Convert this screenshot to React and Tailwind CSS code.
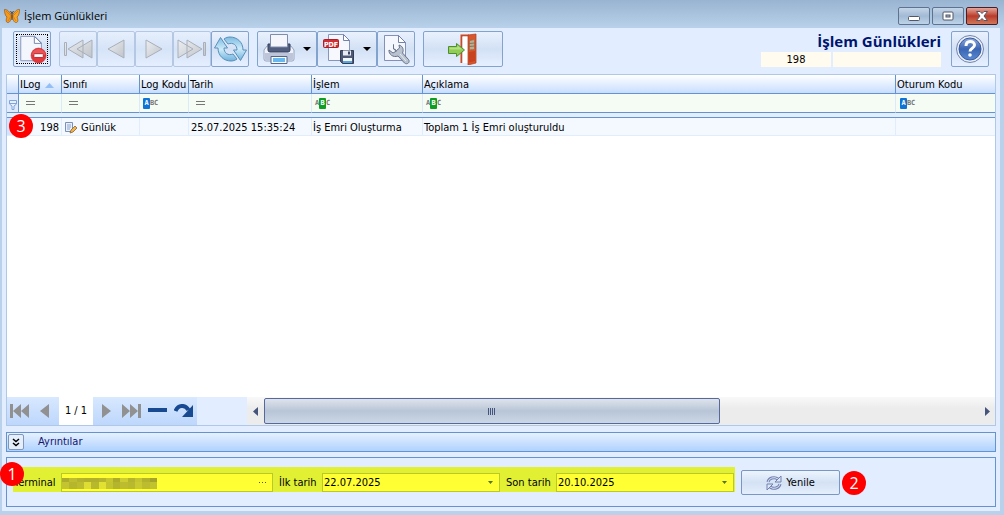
import React from 'react';

const toolButton =
  'flex h-9 shrink-0 items-center justify-center rounded-[2px] border bg-linear-to-b';
const normal = 'border-[#83a3cf] from-[#e9f1fd] via-[#d3e1f5] to-[#e6f0ff]';
const faded = 'border-[#b4c7e3] from-[#e6effc] via-[#d6e4f8] to-[#e4eefe]';

function ToolButton({ label, className, disabled, children }) {
  return (
    <button type="button" aria-label={label} disabled={disabled} className={`${toolButton} ${disabled ? faded : normal} ${className}`}>
      {children}
    </button>
  );
}

function Butterfly() {
  return (
    <svg width="16" height="16" viewBox="0 0 16 16">
      <path d="M.5 1.500C3 1 6 4 7.500 7.500 7.500 11 6 15 3.500 14.500 1.500 14 2 11 3 9 1 8 .5 4 .5 1.500Z" fill="#f39a1c" stroke="#8a4a10" strokeWidth=".6" />
      <path d="M15.500 1.500C13 1 10 4 8.500 7.500 8.500 11 10 15 12.500 14.500 14.500 14 14 11 13 9 15 8 15.500 4 15.500 1.500Z" fill="#f7a626" stroke="#8a4a10" strokeWidth=".6" />
      <path d="M2 3l5 5-3 5M14 3L9 8l3 5" fill="none" stroke="#d97c0c" strokeWidth=".8" />
      <path d="M8 5v7M8 5.500L6.500 3M8 5.500L9.500 3" stroke="#4f3420" strokeWidth=".9" />
    </svg>
  );
}

function GrayDefs() {
  return (
    <defs>
      <linearGradient id="gray" x1="0" y1="0" x2="1" y2="1">
        <stop offset="0" stopColor="#eceef1" />
        <stop offset="1" stopColor="#bfc4ca" />
      </linearGradient>
    </defs>
  );
}

function FirstIcon() {
  return (
    <svg width="30" height="20" viewBox="0 0 30 20" fill="url(#gray)" stroke="#a9afb8" strokeLinejoin="round">
      <GrayDefs />
      <path d="M1.500 3.500h2v13h-2zM20 1v18L5 10zM29 1v18L14 10z" />
    </svg>
  );
}

function PrevIcon() {
  return (
    <svg width="18" height="20" viewBox="0 0 18 20" fill="url(#gray)" stroke="#a9afb8" strokeLinejoin="round">
      <path d="M17 1v18L1 10z" />
    </svg>
  );
}

function NextIcon() {
  return (
    <svg width="18" height="20" viewBox="0 0 18 20" fill="url(#gray)" stroke="#a9afb8" strokeLinejoin="round">
      <path d="M1 1v18l16-9z" />
    </svg>
  );
}

function LastIcon() {
  return (
    <svg width="30" height="20" viewBox="0 0 30 20" fill="url(#gray)" stroke="#a9afb8" strokeLinejoin="round">
      <path d="M26.500 3.500h2v13h-2zM10 1v18l15-9zM1 1v18l15-9z" />
    </svg>
  );
}

function DeletePageIcon() {
  return (
    <svg width="32" height="32" viewBox="0 0 32 32">
      <path d="M4 2.500h15l7 7v19H4z" fill="#f4f6fd" stroke="#8391b8" />
      <path d="M18.500 2.500v7.500H26z" fill="#fff" stroke="#7482ab" />
      <circle cx="23" cy="23" r="8" fill="#e2383c" stroke="#c5292e" strokeWidth=".6" />
      <path d="M15.800 22a7.300 7.300 0 0 1 14.400 0z" fill="#f2686a" opacity=".6" />
      <rect x="18" y="21" width="10" height="4" rx=".5" fill="#fff" stroke="#b2252b" />
    </svg>
  );
}

function RefreshIcon() {
  return (
    <svg width="33" height="26" viewBox="0 0 33 26" strokeLinejoin="round">
      <defs>
        <linearGradient id="cyan" x1="0" y1="0" x2="0" y2="1">
          <stop offset="0" stopColor="#7dbce2" />
          <stop offset=".5" stopColor="#cdebf9" />
          <stop offset="1" stopColor="#6fb2dc" />
        </linearGradient>
      </defs>
      <path d="M6.500 1.500L.5 12H4c0 8 6 13 13 13 2 0 4-.5 6-2l-4-5c-5 2-9-1-9-6h3.500z" fill="url(#cyan)" stroke="#5a8fba" />
      <path d="M26.500 24.500L32.500 14H29C29 6 23 1 16 1c-2 0-4 .5-6 2l4 5c5-2 9 1 9 6h-3.500z" fill="url(#cyan)" stroke="#5a8fba" />
    </svg>
  );
}

function PrinterIcon() {
  return (
    <svg width="32" height="32" viewBox="0 0 32 32">
      <path d="M4 13h24l3 4v9q0 2-2 2H3q-2 0-2-2v-9z" fill="#eef1f8" stroke="#98a4bf" />
      <path d="M2 20h28v6q0 1.500-2 1.500H4Q2 27.500 2 26z" fill="#bcc5d9" />
      <path d="M5 11h22v6q0 2-2 2H7q-2 0-2-2z" fill="#515e7d" stroke="#35415f" />
      <path d="M7.500 1.500h17V14h-17z" fill="#f4f6fc" stroke="#7e8cae" />
      <path d="M8 23.500h16v7H8z" fill="#f6fbff" stroke="#566686" />
      <path d="M10 25h12v4H10z" fill="#66b8ee" />
    </svg>
  );
}

function PdfIcon() {
  return (
    <svg width="32" height="32" viewBox="0 0 32 32">
      <path d="M5.500 1.500h15l6 6v20h-21z" fill="#f7f8fe" stroke="#8795bd" />
      <path d="M20.500 1.500v6h6z" fill="#fff" stroke="#7482ab" />
      <rect x=".5" y="6.500" width="15" height="8" rx="1" fill="#cf2f35" stroke="#a91f25" />
      <text x="8" y="13.500" textAnchor="middle" fill="#fff" fontFamily="DejaVu Sans Condensed" fontWeight="700" fontSize="7">PDF</text>
      <path d="M17.500 17.500h13v13h-11l-2-2z" fill="#4e5976" stroke="#343e59" />
      <path d="M20 17.500h8v5h-8z" fill="#e8edf5" />
      <path d="M25 18.500h2v3h-2z" fill="#3c4663" />
      <path d="M20 25h9v5h-9z" fill="#f3f8fc" />
      <path d="M20 28h9v2h-9z" fill="#58a8dc" />
    </svg>
  );
}

function WrenchPageIcon() {
  return (
    <svg width="28" height="32" viewBox="0 0 28 32">
      <path d="M2.500 2.500h14l7 7v18h-21z" fill="#f5f7fe" stroke="#8391b8" />
      <path d="M16.500 2.500v7h7z" fill="#fff" stroke="#7482ab" />
      <path d="M11.500 11.500v4l3 2 3-2.500-.5-3c4 1 5 5 3.500 8l6 6.500c2 3-1.500 5.500-4 3.500L16 23c-5 2-9.500-2-9-6l4 3 3.500-2-3-2z" fill="#b9c2cf" stroke="#67738a" strokeLinejoin="round" />
      <path d="M18 21l6 7" stroke="#e9edf2" />
    </svg>
  );
}

function ExitIcon() {
  return (
    <svg width="30" height="32" viewBox="0 0 30 32">
      <path d="M13.500 30V2.500H21" fill="none" stroke="#cb4a25" strokeWidth="2" />
      <path d="M14.500 3.500H20V30h-5.500z" fill="#fff" />
      <path d="M20 2l8-1v29l-8 2z" fill="#d9552c" stroke="#b03b1b" strokeWidth=".7" />
      <path d="M21.500 7.500l5-1v10l-5 .5z" fill="#e9dfc0" stroke="#9b5b37" strokeWidth=".7" />
      <path d="M23 7v10M25 7v9.500M21.500 10.500l5-.5M21.500 13.500l5-.5" stroke="#78624a" strokeWidth=".8" />
      <path d="M21 19l6-1v10l-6 1.500z" fill="#c7431f" />
      <path d="M.5 13.500h8v-3l8 6.500-8 6.500v-3h-8z" fill="#8fcd55" stroke="#508d31" strokeLinejoin="round" />
      <path d="M1.500 14.500h8v-2l4.500 4H1.500z" fill="#c4e996" opacity=".7" />
    </svg>
  );
}

function HelpIcon() {
  return (
    <svg width="30" height="30" viewBox="0 0 30 30">
      <defs>
        <linearGradient id="help" x1="0" y1="0" x2="0" y2="1">
          <stop offset="0" stopColor="#8fabdc" />
          <stop offset=".5" stopColor="#3a65b3" />
          <stop offset="1" stopColor="#5c8bd2" />
        </linearGradient>
      </defs>
      <circle cx="15" cy="15" r="13.500" fill="#e8eefa" stroke="#7384ad" />
      <circle cx="15" cy="15" r="11" fill="url(#help)" stroke="#385b9d" />
      <path d="M11 12c0-6 8.500-5.500 8.500-1 0 3.500-4.500 3-4.500 6.500" fill="none" stroke="#fff" strokeWidth="3" />
      <circle cx="15" cy="21" r="1.800" fill="#fff" />
    </svg>
  );
}

function Caret() {
  return (
    <svg width="8" height="4" viewBox="0 0 8 4">
      <path d="M0 0h8L4 4z" fill="#000" />
    </svg>
  );
}

function Badge({ n, className }) {
  return (
    <span className={`flex size-6 items-center justify-center rounded-full bg-[#fe0000] font-['Open_Sans',sans-serif] text-base leading-6 text-white ${className}`}>
      {n}
    </span>
  );
}

function EqualsIcon() {
  return (
    <svg width="9" height="4" viewBox="0 0 9 4" className="ml-[7px]" shapeRendering="crispEdges">
      <path d="M0 0h9v1H0zM0 3h9v1H0z" fill="#777" />
    </svg>
  );
}

function AbcFilter({ active }) {
  const color = active === 'A' ? 'bg-[#0f74d8]' : 'bg-[#0d9e22]';
  return (
    <span className="flex h-[11px] font-['DejaVu_Sans_Mono',monospace] text-[7px] leading-[11px] font-bold text-[#777]">
      {['A', 'B', 'C'].map((c) => (
        <span key={c} className={c === active ? `w-[7px] rounded-[1px] text-center text-white ${color}` : 'w-1 text-center'}>
          {c}
        </span>
      ))}
    </span>
  );
}

const columns = ['ILog', 'Sınıfı', 'Log Kodu', 'Tarih', 'İşlem', 'Açıklama', 'Oturum Kodu'];

function LogTable() {
  return (
    <table className="w-full table-fixed border-separate border-spacing-0">
      <colgroup>
        <col className="w-3" />
        <col className="w-[43px]" />
        <col className="w-[78px]" />
        <col className="w-[49px]" />
        <col className="w-[123px]" />
        <col className="w-[111px]" />
        <col />
        <col className="w-[99px]" />
      </colgroup>
      <thead>
        <tr className="h-[19px] bg-linear-to-b from-white to-[#c5dcff] text-left">
          <th className="border-r border-b border-[#6593cf] p-0" />
          {columns.map((c, i) => (
            <th key={c} className="border-b border-[#6593cf] p-0 font-normal not-last:border-r">
              <span className="flex items-center pt-0.5 pl-px leading-4 whitespace-nowrap">
                {c}
                {i === 0 && (
                  <svg width="9" height="5" viewBox="0 0 9 5" className="ml-1">
                    <path d="M4.500 0L9 5H0z" fill="#94bff5" />
                  </svg>
                )}
              </span>
            </th>
          ))}
        </tr>
        <tr className="h-[19px] bg-[#f4fcf3] [&>td]:border-b [&>td]:border-b-[#6593cf] [&>td]:p-0">
          <td className="border-r border-[#6593cf] bg-[#dfebfc]">
            <svg width="8" height="10" viewBox="0 0 8 10" className="mt-1 ml-0.5" fill="#e6f0ff" stroke="#7fa5dc">
              <path d="M.5.500h7V4L5 6v3.500H3V6L.5 4zM.5 3.500h7" />
            </svg>
          </td>
          <td className="border-r border-r-[#dce9fa]"><EqualsIcon /></td>
          <td className="border-r border-r-[#dce9fa]"><EqualsIcon /></td>
          <td className="border-r border-r-[#dce9fa] pl-[3px]!"><AbcFilter active="A" /></td>
          <td className="border-r border-r-[#dce9fa]"><EqualsIcon /></td>
          <td className="border-r border-r-[#dce9fa] pl-[3px]!"><AbcFilter active="B" /></td>
          <td className="border-r border-r-[#dce9fa] pl-[3px]!"><AbcFilter active="B" /></td>
          <td className="pl-1!"><AbcFilter active="A" /></td>
        </tr>
        <tr className="h-[5px]">
          <td colSpan={8} className="border-b border-[#6593cf] bg-[#e3eefd] p-0" />
        </tr>
      </thead>
      <tbody>
        <tr className="h-[18px] bg-[#f4f9ff] leading-[15px] [&>td]:border-b [&>td]:border-[#e1edfc] [&>td]:px-0 [&>td]:pt-0.5 [&>td]:pb-0 [&>td]:whitespace-nowrap [&>td:not(:last-child)]:border-r">
          <td className="relative bg-[#d4e4fa]">
            <Badge n={3} className="absolute -top-1 left-0.5" />
          </td>
          <td className="pr-0.5! text-right">198</td>
          <td>
            <span className="flex items-center gap-1 pl-[3px]">
              <svg width="12" height="12" viewBox="0 0 12 12">
                <path d="M.5.500h7v9h-7z" fill="#eaf0fb" stroke="#7b90b8" />
                <path d="M2 3h4M2 5h4M2 7h3" stroke="#8ba4cd" />
                <path d="M5 11l1-3 4-4 2 2-4 4z" fill="#f0b64b" stroke="#8d6235" strokeWidth=".8" />
              </svg>
              Günlük
            </span>
          </td>
          <td />
          <td className="pl-0.5!">25.07.2025 15:35:24</td>
          <td className="pl-px!">İş Emri Oluşturma</td>
          <td className="pl-px!">Toplam 1 İş Emri oluşturuldu</td>
          <td />
        </tr>
      </tbody>
    </table>
  );
}

function RecordBar() {
  return (
    <div className="flex h-7 bg-[#e2eeff]">
      <div className="flex w-[190px] shrink-0 items-center bg-linear-to-b from-[#d8e8ff] to-[#bdd7fc] text-[#919191]">
        <button type="button" aria-label="İlk" className="ml-[3px]">
          <svg width="19" height="14" viewBox="0 0 19 14" fill="currentColor"><path d="M0 0h3v14H0zM11 0v14L3 7zM19 0v14l-8-7z" /></svg>
        </button>
        <button type="button" aria-label="Önceki" className="ml-[11px]">
          <svg width="9" height="14" viewBox="0 0 9 14" fill="currentColor"><path d="M9 0v14L0 7z" /></svg>
        </button>
        <span className="ml-2.5 flex h-full w-[34px] items-center justify-center bg-white text-black">1 / 1</span>
        <button type="button" aria-label="Sonraki" className="ml-[9px]">
          <svg width="9" height="14" viewBox="0 0 9 14" fill="currentColor"><path d="M0 0v14l9-7z" /></svg>
        </button>
        <button type="button" aria-label="Son" className="ml-[11px]">
          <svg width="19" height="14" viewBox="0 0 19 14" fill="currentColor"><path d="M16 0h3v14h-3zM8 0v14l8-7zM0 0v14l8-7z" /></svg>
        </button>
        <button type="button" aria-label="Sil" className="ml-[7px]">
          <svg width="19" height="14" viewBox="0 0 19 14"><path d="M0 4h19v4H0z" fill="#174a91" /></svg>
        </button>
        <button type="button" aria-label="Tazele" className="ml-[7px]">
          <svg width="19" height="14" viewBox="0 0 19 14">
            <path d="M1.500 7C4 1 11 0 14.500 6" fill="none" stroke="#174a91" strokeWidth="4" />
            <path d="M19 1v12H8z" fill="#174a91" />
          </svg>
        </button>
      </div>
      <div className="w-[50px] shrink-0" />
      <div className="flex flex-1 items-center bg-linear-to-b from-[#f9f9f9] to-[#ececec] to-40%">
        <button type="button" aria-label="Sola kaydır" className="flex w-[17px] shrink-0 justify-center">
          <svg width="5" height="9" viewBox="0 0 5 9"><path d="M5 0v9L0 4.500z" fill="#46547b" /></svg>
        </button>
        <div className="flex h-full flex-1 items-center pr-1">
          <div className="flex h-[26px] w-[64%] items-center justify-center gap-px rounded-[2px] border border-[#58689a] bg-linear-to-b from-[#dfe4eb] via-[#b8c5d7] to-[#ccd7e6]">
            <span className="h-[7px] w-px bg-[#46547b]" />
            <span className="h-[7px] w-px bg-[#46547b]" />
            <span className="h-[7px] w-px bg-[#46547b]" />
            <span className="h-[7px] w-px bg-[#46547b]" />
          </div>
        </div>
        <button type="button" aria-label="Sağa kaydır" className="flex w-[15px] shrink-0 justify-center">
          <svg width="5" height="9" viewBox="0 0 5 9"><path d="M0 0v9l5-4.500z" fill="#46547b" /></svg>
        </button>
      </div>
    </div>
  );
}

const mosaic = [
  ['#adad2b', '#bdbd2f', '#b3b32d', '#b0b02c', '#b0b02c', '#b6b62d', '#c6c62e', '#acac2a', '#cdcd31', '#b5b52d', '#c5c530', '#b2b22d', '#a4a42a'],
  ['#c4c430', '#b6b62d', '#bcbc2e', '#dddd33', '#b8b82d', '#e1e133', '#c4c42f', '#b4b42d', '#bcbc2e', '#b9b92e', '#c9c931', '#bcbc2e', '#c2c22f'],
];

const field = 'flex h-[19px] items-center border border-[#b9c929] bg-[#ffff33]';

function DateField({ id, label, value, className }) {
  return (
    <>
      <label htmlFor={id} className={`shrink-0 pl-1.5 leading-[19px] ${className}`}>{label}</label>
      <div className={`${field} w-[178px]`}>
        <input id={id} type="text" defaultValue={value} className="min-w-0 flex-1 bg-transparent pl-px text-[11px] outline-none" />
        <button type="button" aria-label={`${label} seç`} className="flex w-[18px] justify-center text-[#55752d]">
          <svg width="5" height="3" viewBox="0 0 5 3"><path d="M0 0h5L2.500 3z" fill="currentColor" /></svg>
        </button>
      </div>
    </>
  );
}

function FilterPanel() {
  return (
    <div className="mt-[5px] mb-1 flex h-[50px] items-start border border-[#6593cf] pt-[9px] pl-1.5">
      <div className="relative flex h-[25px] items-end bg-[#e2f033] pr-px">
        <Badge n={1} className="absolute -top-[5px] -left-[13px]" />
        <label htmlFor="terminal" className="w-12 shrink-0 pl-px leading-[19px]">Terminal</label>
        <div className={`${field} w-[212px]`}>
          <div className="relative flex-1">
            <input id="terminal" type="text" className="block w-full bg-transparent outline-none" />
            <svg width="95" height="11" viewBox="0 0 95 11" className="absolute top-[3px] left-0" shapeRendering="crispEdges">
              {mosaic.map((row, y) =>
                row.map((fill, x) => (
                  <rect key={`${x}-${y}`} x={x * 7.300} y={y * 4} width="7.400" height={y ? 7 : 4} fill={fill} />
                ))
              )}
            </svg>
          </div>
          <button type="button" aria-label="Terminal seç" className="flex w-[18px] justify-center">
            <svg width="8" height="1" viewBox="0 0 8 1"><path d="M0 0h1v1H0zM3 0h1v1H3zM6 0h1v1H6z" fill="#555b20" /></svg>
          </button>
        </div>
        <DateField id="start" label="İlk tarih" value="22.07.2025" className="w-[49px]" />
        <DateField id="end" label="Son tarih" value="20.10.2025" className="w-14" />
      </div>
      <button type="button" className="mt-[3px] ml-1.5 flex h-[25px] w-[99px] items-center justify-center gap-1 rounded-[2px] border border-[#7897c4] bg-linear-to-b from-[#edf4fe] via-[#d4e2f4] to-[#e4eefc]">
        <svg width="16" height="16" viewBox="0 0 16 16" fill="none">
          <path d="M2 7a6 5 0 0 1 10-3M14 9a6 5 0 0 1-10 3" stroke="#7281b0" strokeWidth="3" />
          <path d="M2 7a6 5 0 0 1 10-3M14 9a6 5 0 0 1-10 3" stroke="#dce6f6" />
          <path d="M15 1v6H9zM1 15V9h6z" fill="#dce6f6" stroke="#7281b0" strokeLinejoin="round" />
        </svg>
        Yenile
      </button>
      <Badge n={2} className="mt-1 ml-0.5" />
    </div>
  );
}

const windowButton = 'flex h-[18px] w-8 items-center justify-center rounded-[2px] border bg-linear-to-b';
const blueButton = 'border-[#5e7390] from-[#c4d5e8] via-[#a2bad4] to-[#bdd3e9]';

export default function App() {
  return (
    <div className="flex min-h-screen flex-col bg-[#b9d1ea] font-['DejaVu_Sans_Condensed','DejaVu_Sans',sans-serif] text-[11px] leading-4 text-black">
      <header className="flex h-7 items-center bg-linear-to-b from-[#99b4d1] to-[#b9d1ea] pt-1 pr-1.5 pl-1">
        <Butterfly />
        <h1 className="ml-1 flex-1 font-['Open_Sans',sans-serif] text-[11px] leading-4">İşlem Günlükleri</h1>
        <div className="flex gap-0.5">
          <button type="button" aria-label="Küçült" className={`${windowButton} ${blueButton}`}>
            <svg width="12" height="10" viewBox="0 0 12 10"><rect x=".5" y="5.500" width="11" height="4" rx="1" fill="#fff" stroke="#535666" /></svg>
          </button>
          <button type="button" aria-label="Büyüt" className={`${windowButton} ${blueButton}`}>
            <svg width="12" height="10" viewBox="0 0 12 10" stroke="#535666"><rect x="1" y="1" width="10" height="8" rx="1" fill="#fff" /><rect x="4" y="4" width="4" height="2" fill="#a2bad4" /></svg>
          </button>
          <button type="button" aria-label="Kapat" className={`${windowButton} border-[#4b1d24] from-[#e5a59a] via-[#b93b2b] to-[#d27659]`}>
            <svg width="12" height="10" viewBox="0 0 12 10"><path d="M.5.500h3.500l2 2 2-2h3.500L8 5l3.500 4.500H8l-2-2-2 2H.5L4 5z" fill="#fff" stroke="#535666" /></svg>
          </button>
        </div>
      </header>

      <main className="mr-1 mb-1 ml-0.5 flex flex-1 flex-col bg-[#e2eeff] pr-1 pl-1">
        <div className="flex h-[46px] shrink-0 items-start pt-[3px] pr-[7px] pl-[7px]">
          <ToolButton label="Sil" className="w-[38px] bg-[#c7dffa]">
            <span className="flex h-[30px] w-8 items-center justify-center border border-dotted border-black">
              <DeletePageIcon />
            </span>
          </ToolButton>
          <ToolButton label="İlk kayıt" disabled className="ml-2 w-[38px]"><FirstIcon /></ToolButton>
          <ToolButton label="Önceki kayıt" disabled className="w-[38px]"><PrevIcon /></ToolButton>
          <ToolButton label="Sonraki kayıt" disabled className="w-[38px]"><NextIcon /></ToolButton>
          <ToolButton label="Son kayıt" disabled className="w-[38px]"><LastIcon /></ToolButton>
          <ToolButton label="Tazele" className="w-[38px]"><RefreshIcon /></ToolButton>
          <ToolButton label="Yazdır" className="ml-2 w-[60px] gap-2"><PrinterIcon /><Caret /></ToolButton>
          <ToolButton label="PDF kaydet" className="w-[60px] gap-2"><PdfIcon /><Caret /></ToolButton>
          <ToolButton label="Ayarlar" className="w-[38px]"><WrenchPageIcon /></ToolButton>
          <ToolButton label="Çıkış" className="ml-2 w-20"><ExitIcon /></ToolButton>
          <div className="ml-auto flex flex-col items-end">
            <h2 className="h-[21px] font-['Open_Sans',sans-serif] text-[15px] leading-[21px] font-bold whitespace-nowrap text-[#00146e]">İşlem Günlükleri</h2>
            <div className="flex gap-0.5">
              <input aria-label="Kayıt no" readOnly value="198" className="h-[15px] w-[70px] bg-[#fffbef] text-center" />
              <input aria-label="Kayıt adı" readOnly value="" className="h-[15px] w-[108px] bg-[#fffbef]" />
            </div>
          </div>
          <ToolButton label="Yardım" className="ml-2.5 w-[38px]"><HelpIcon /></ToolButton>
        </div>

        <section className="flex flex-1 flex-col border border-[#b0c8e8] bg-white">
          <div className="flex-1">
            <LogTable />
          </div>
          <RecordBar />
        </section>

        <div className="mt-1.5 flex h-5 shrink-0 items-center border border-[#6593cf] bg-linear-to-b from-[#e6f1ff] to-[#afd2ff]">
          <button type="button" aria-label="Ayrıntıları aç" aria-expanded="false" className="ml-px flex h-4 w-4 items-center justify-center rounded-[2px] border border-[#8296b6] bg-[#e5effc]">
            <svg width="8" height="9" viewBox="0 0 8 9" fill="none" stroke="#000" strokeWidth="1.500"><path d="M1 1l3 2.500L7 1M1 5l3 2.500L7 5" /></svg>
          </button>
          <span className="ml-3.5 text-[#15156e]">Ayrıntılar</span>
        </div>

        <FilterPanel />
      </main>
    </div>
  );
}
